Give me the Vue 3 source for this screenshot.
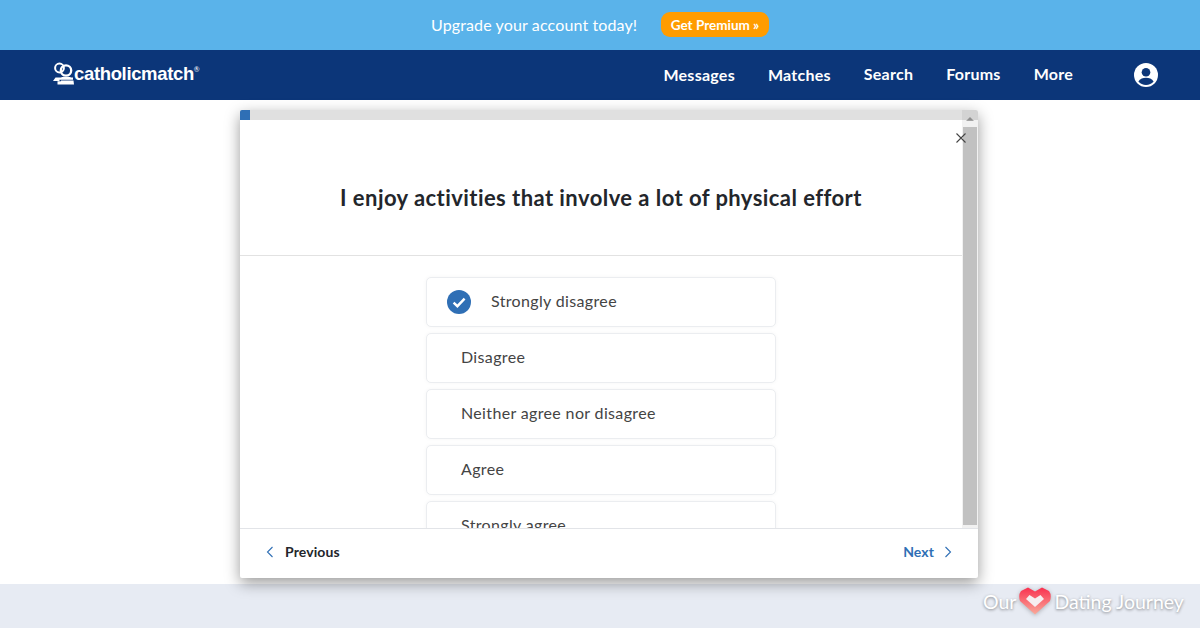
<template>
  <div class="page">
    <div class="promo">
      <span class="promo-text">Upgrade your account today!</span>
      <a class="promo-btn">Get Premium »</a>
    </div>

    <header class="nav">
      <div class="logo">
        <svg class="logo-mark" width="22" height="23" viewBox="0 0 22 23">
          <circle cx="6.5" cy="6" r="4.4" fill="none" stroke="#fff" stroke-width="2" />
          <circle cx="13" cy="8.5" r="5.2" fill="none" stroke="#fff" stroke-width="2.3" />
          <path d="M0 19 L2.5 15.5 H8 L9 15 H17 L18 15.5 H20 V17.8 H6.5 V19 Z" fill="#fff" />
          <path d="M4.5 19.2 H8 V18.6 H20.5 L21 22.6 H4.5 Z" fill="#fff" />
        </svg>
        <span class="logo-text">catholicmatch</span><sup class="logo-reg">®</sup>
      </div>
      <nav class="links">
        <a v-for="l in links" :key="l.label" :class="{ low: l.low }">{{ l.label }}</a>
      </nav>
      <svg class="avatar" width="24" height="24" viewBox="0 0 24 24">
        <circle cx="12" cy="12" r="12" fill="#fff" />
        <circle cx="12" cy="9.2" r="4.3" fill="#0c3679" />
        <path d="M4.4 18.6 C6 15.6 9 14.8 12 14.8 C15 14.8 18 15.6 19.6 18.6 C17.8 20.8 15 22 12 22 C9 22 6.2 20.8 4.4 18.6 Z" fill="#0c3679" />
      </svg>
    </header>

    <main class="content"></main>
    <footer class="foot"></footer>

    <div class="modal">
      <div class="scroll-area">
        <div class="body">
          <h1 class="question">I enjoy activities that involve a lot of physical effort</h1>
          <div class="options">
            <div v-for="o in options" :key="o.label" class="option" :class="{ selected: o.selected }">
              <svg v-if="o.selected" class="check" width="24" height="24" viewBox="0 0 24 24">
                <circle cx="12" cy="12" r="12" fill="#2f6fb5" />
                <path d="M6.6 12.6 L10.4 16.2 L17.6 8.6" fill="none" stroke="#fff" stroke-width="2.4" />
              </svg>
              <span>{{ o.label }}</span>
            </div>
          </div>
        </div>
        <div class="scrollbar">
          <div class="arrow"></div>
          <div class="thumb"></div>
        </div>
      </div>
      <div class="progress"><div class="progress-fill" :style="{ width: progress + 'px' }"></div></div>
      <button class="close" aria-label="Close">
        <svg width="10" height="10" viewBox="0 0 10 10">
          <path d="M0.5 0.5 L9.5 9.5 M9.5 0.5 L0.5 9.5" stroke="#444" stroke-width="1.1" fill="none" />
        </svg>
      </button>
      <div class="actions">
        <a class="prev">
          <svg width="8" height="12" viewBox="0 0 8 12"><path d="M6.5 1 L1.5 6 L6.5 11" fill="none" stroke="#2f6fb5" stroke-width="1.1" /></svg>
          Previous
        </a>
        <a class="next">
          Next
          <svg width="8" height="12" viewBox="0 0 8 12"><path d="M1.5 1 L6.5 6 L1.5 11" fill="none" stroke="#2f6fb5" stroke-width="1.1" /></svg>
        </a>
      </div>
    </div>

    <div class="mark">
      <span>Our</span>
      <svg class="heart" width="34" height="28" viewBox="0 0 34 28">
        <defs>
          <linearGradient id="hg" x1="0" y1="0" x2="0" y2="1">
            <stop offset="0" stop-color="#f9304f" />
            <stop offset="1" stop-color="#f9ab9b" />
          </linearGradient>
        </defs>
        <path d="M17 27.5 L2 14 Q0 8 3 4 L10 0.5 L17 4.5 L24 0.5 L31 4 Q34 8 32 14 Z" fill="url(#hg)" />
        <path d="M17 20 L26 12 L22.5 8 L17 11.5 L11.5 8 L8 12 Z" fill="#f6eef0" />
      </svg>
      <span>Dating Journey</span>
    </div>
  </div>
</template>

<script setup>
const progress = 10

const links = [
  { label: 'Messages', low: true },
  { label: 'Matches', low: true },
  { label: 'Search' },
  { label: 'Forums' },
  { label: 'More' },
]

const options = [
  { label: 'Strongly disagree', selected: true },
  { label: 'Disagree' },
  { label: 'Neither agree nor disagree' },
  { label: 'Agree' },
  { label: 'Strongly agree' },
]
</script>

<style>
html, body { margin: 0; background: #fff; overflow: hidden; }
</style>

<style scoped>
.page {
  position: relative;
  width: 1200px;
  height: 628px;
  display: flex;
  flex-direction: column;
  font-family: Lato, 'Noto Sans', sans-serif;
  overflow: hidden;
}

.promo {
  height: 50px;
  background: #5ab3ea;
  display: flex;
  align-items: center;
  justify-content: center;
  gap: 24px;
  flex: none;
}
.promo-text { color: #fff; font-size: 16px; letter-spacing: 0.13px; width: 206px; white-space: nowrap; padding-bottom: 2px; }
.promo-btn {
  background: #ff9c00;
  color: #fff;
  font-size: 13.5px;
  font-weight: 700;
  width: 108px;
  height: 25px;
  margin-top: -1px;
  border-radius: 9px;
  display: flex;
  align-items: center;
  justify-content: center;
  white-space: nowrap;
}

.nav {
  height: 50px;
  background: #0c3679;
  flex: none;
  display: flex;
  align-items: center;
  padding: 0 42px 0 53px;
  color: #fff;
}
.logo { display: flex; align-items: center; flex: 1; margin-top: -3px; }
.logo-text {
  font-family: 'Liberation Sans', Arial, sans-serif;
  font-size: 18.5px;
  font-weight: 700;
  letter-spacing: -0.35px;
  margin-left: -1px;
}
.logo-reg { font-size: 7px; margin-top: -9px; }
.links { display: flex; gap: 33px; margin-right: 61px; position: relative; top: -1px; }
.links a { font-size: 16px; font-weight: 700; line-height: 20px; letter-spacing: 0.25px; }
.links a.low { position: relative; top: 1px; }
.avatar { flex: none; }

.content { flex: 1; background: #fff; }
.foot { height: 44px; background: #e7ebf3; flex: none; }

.modal {
  position: absolute;
  left: 240px;
  top: 110px;
  width: 738px;
  height: 468px;
  background: #fff;
  border-radius: 2px;
  box-shadow: 0 5px 15px rgba(0, 0, 0, 0.4);
  display: flex;
  flex-direction: column;
  overflow: hidden;
}
.scroll-area { height: 418px; display: flex; flex: none; }
.body { flex: 1; overflow: hidden; padding-top: 10px; }
.progress {
  position: absolute;
  left: 0;
  top: 0;
  width: 100%;
  height: 10px;
  background: rgba(0, 0, 0, 0.12);
}
.progress-fill { height: 10px; background: #2f6fb5; }
.close {
  position: absolute;
  left: 716px;
  top: 23px;
  width: 10px;
  height: 10px;
  padding: 0;
  border: 0;
  background: none;
  display: flex;
}
.question {
  margin: 0;
  height: 136px;
  box-sizing: border-box;
  padding-top: 63px;
  border-bottom: 1px solid #e2e2e2;
  text-align: center;
  font-size: 22px;
  line-height: 30px;
  font-weight: 700;
  letter-spacing: 0.44px;
  color: #23262b;
}
.options {
  width: 350px;
  margin: 21px 0 0 186px;
  display: flex;
  flex-direction: column;
  gap: 6px;
}
.option {
  height: 50px;
  flex: none;
  box-sizing: border-box;
  border: 1px solid #ebedf0;
  border-radius: 5px;
  box-shadow: 0 0 4px rgba(0, 0, 0, 0.04);
  display: flex;
  align-items: center;
  padding: 0 0 4px 34px;
  color: #444;
  font-size: 16px;
  letter-spacing: 0.35px;
  background: #fff;
}
.option.selected { padding: 0 0 0 20px; }
.option.selected span { padding-bottom: 4px; }
.check { margin-right: 20px; flex: none; }

.scrollbar {
  width: 16px;
  flex: none;
  background: #f1f1f1;
  display: flex;
  flex-direction: column;
  align-items: center;
}
.arrow {
  margin-top: 7px;
  width: 0;
  height: 0;
  border-left: 4px solid transparent;
  border-right: 4px solid transparent;
  border-bottom: 4px solid #a3a3a3;
}
.thumb { width: 14px; height: 398px; margin-top: 6px; background: #c1c1c1; }

.actions {
  height: 50px;
  flex: none;
  box-sizing: border-box;
  border-top: 1px solid #e2e4e8;
  display: flex;
  align-items: center;
  justify-content: space-between;
  padding: 0 26px 4px;
  font-size: 14px;
  font-weight: 700;
  letter-spacing: 0.1px;
}
.prev, .next { display: flex; align-items: center; gap: 11px; }
.next { gap: 10px; }
.prev { color: #23262b; }
.next { color: #2f6fb5; }

.mark {
  position: absolute;
  left: 983px;
  top: 586px;
  height: 30px;
  display: flex;
  align-items: center;
  gap: 2px;
  color: #fff;
  font-family: Lato, 'Open Sans', sans-serif;
  font-size: 19.5px;
  white-space: nowrap;
  text-shadow: 0 1px 3px rgba(0, 0, 0, 0.45);
}
.heart { filter: drop-shadow(0 1px 2px rgba(0, 0, 0, 0.25)); }
</style>
